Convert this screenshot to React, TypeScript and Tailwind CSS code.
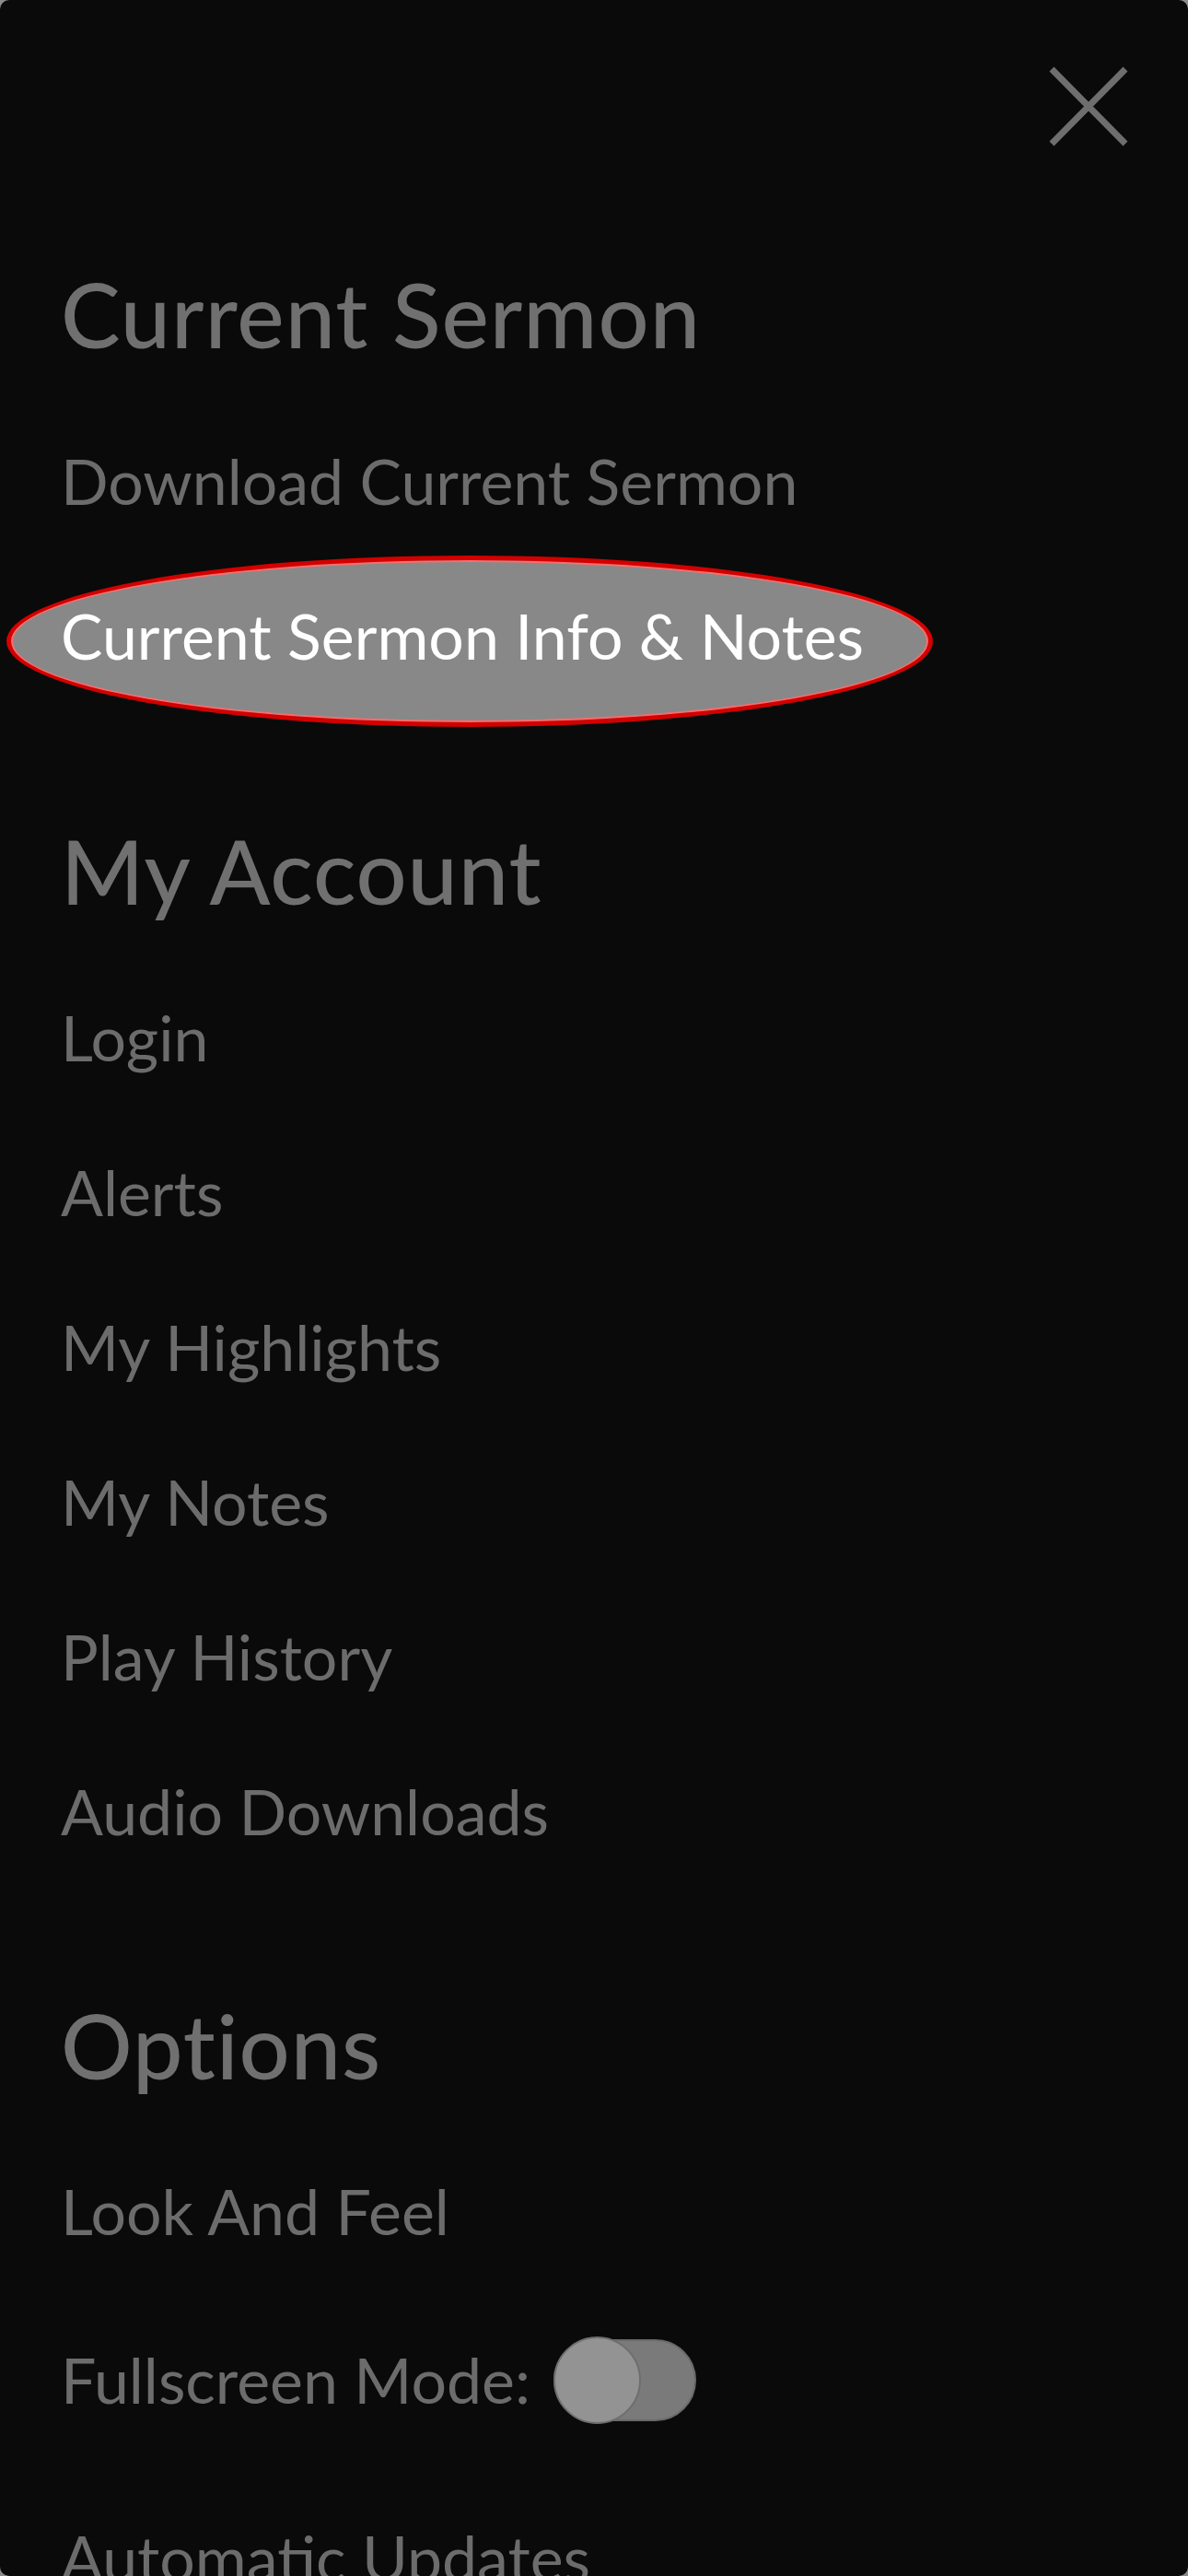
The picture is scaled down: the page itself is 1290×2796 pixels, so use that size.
import { useState } from 'react'

const font = { fontFamily: 'Lato, "Noto Sans", sans-serif' }

function CloseIcon() {
  return (
    <svg width="86" height="87" viewBox="0 0 86 87" fill="none">
      <path d="M3 3L83 84M83 3L3 84" stroke="#6e6e6e" strokeWidth="7" />
    </svg>
  )
}

function Heading({ children }: { children: string }) {
  return (
    <h2 className="px-[66px] text-[97px] leading-[115px] font-medium tracking-[1px] text-[#707070]">{children}</h2>
  )
}

function Item({ children }: { children: string }) {
  return (
    <div className="flex h-[168px] items-center px-[66px] text-[68px] leading-[82px] text-[#6c6c6c]">
      {children}
    </div>
  )
}

function Toggle({ on, onChange }: { on: boolean; onChange: () => void }) {
  return (
    <button onClick={onChange} className="relative ml-[25px] h-[95px] w-[155px] shrink-0">
      <span className="absolute inset-x-0 top-[3px] bottom-[3px] rounded-full border-2 border-[#6a6a6a] bg-[#7a7a7a]" />
      <span
        className={`absolute top-0 h-[95px] w-[95px] rounded-full border-2 border-[#6e6e6e] bg-[#939393] ${on ? 'right-0' : 'left-0'}`}
      />
    </button>
  )
}

export default function App() {
  const [fullscreen, setFullscreen] = useState(false)

  return (
    <div className="h-[2796px] w-[1290px] overflow-hidden bg-[#8c8c8c]" style={font}>
      <div className="h-full w-full overflow-hidden rounded-[10px] bg-[#0a0a0a]">
        {/* Close */}
        <div className="flex justify-end pt-[72px] pr-[65px]">
          <button aria-label="Close">
            <CloseIcon />
          </button>
        </div>

        {/* Current Sermon */}
        <section className="mt-[124px]">
          <Heading>Current Sermon</Heading>
          <div className="mt-[40px]">
            <Item>Download Current Sermon</Item>
            <div className="relative flex h-[168px] items-center px-[66px] text-[68px] leading-[82px]">
              <div className="absolute left-[7px] top-[-3px] h-[186px] w-[1006px] rounded-[50%] border-[5px] border-[#d30000] bg-[#888888] shadow-[inset_0_0_0_2px_#ff6b6b]" />
              <span className="relative text-white">Current Sermon Info &amp; Notes</span>
            </div>
          </div>
        </section>

        {/* My Account */}
        <section className="mt-[113px]">
          <Heading>My Account</Heading>
          <div className="mt-[40px]">
            <Item>Login</Item>
            <Item>Alerts</Item>
            <Item>My Highlights</Item>
            <Item>My Notes</Item>
            <Item>Play History</Item>
            <Item>Audio Downloads</Item>
          </div>
        </section>

        {/* Options */}
        <section className="mt-[112px]">
          <Heading>Options</Heading>
          <div className="mt-[39px]">
            <Item>Look And Feel</Item>
            <div className="flex h-[198px] items-center px-[66px] text-[68px] leading-[82px] text-[#6c6c6c]">
              <span>Fullscreen Mode:</span>
              <Toggle on={fullscreen} onChange={() => setFullscreen(!fullscreen)} />
            </div>
            <div className="mt-[10px]">
              <Item>Automatic Updates</Item>
            </div>
          </div>
        </section>
      </div>
    </div>
  )
}
